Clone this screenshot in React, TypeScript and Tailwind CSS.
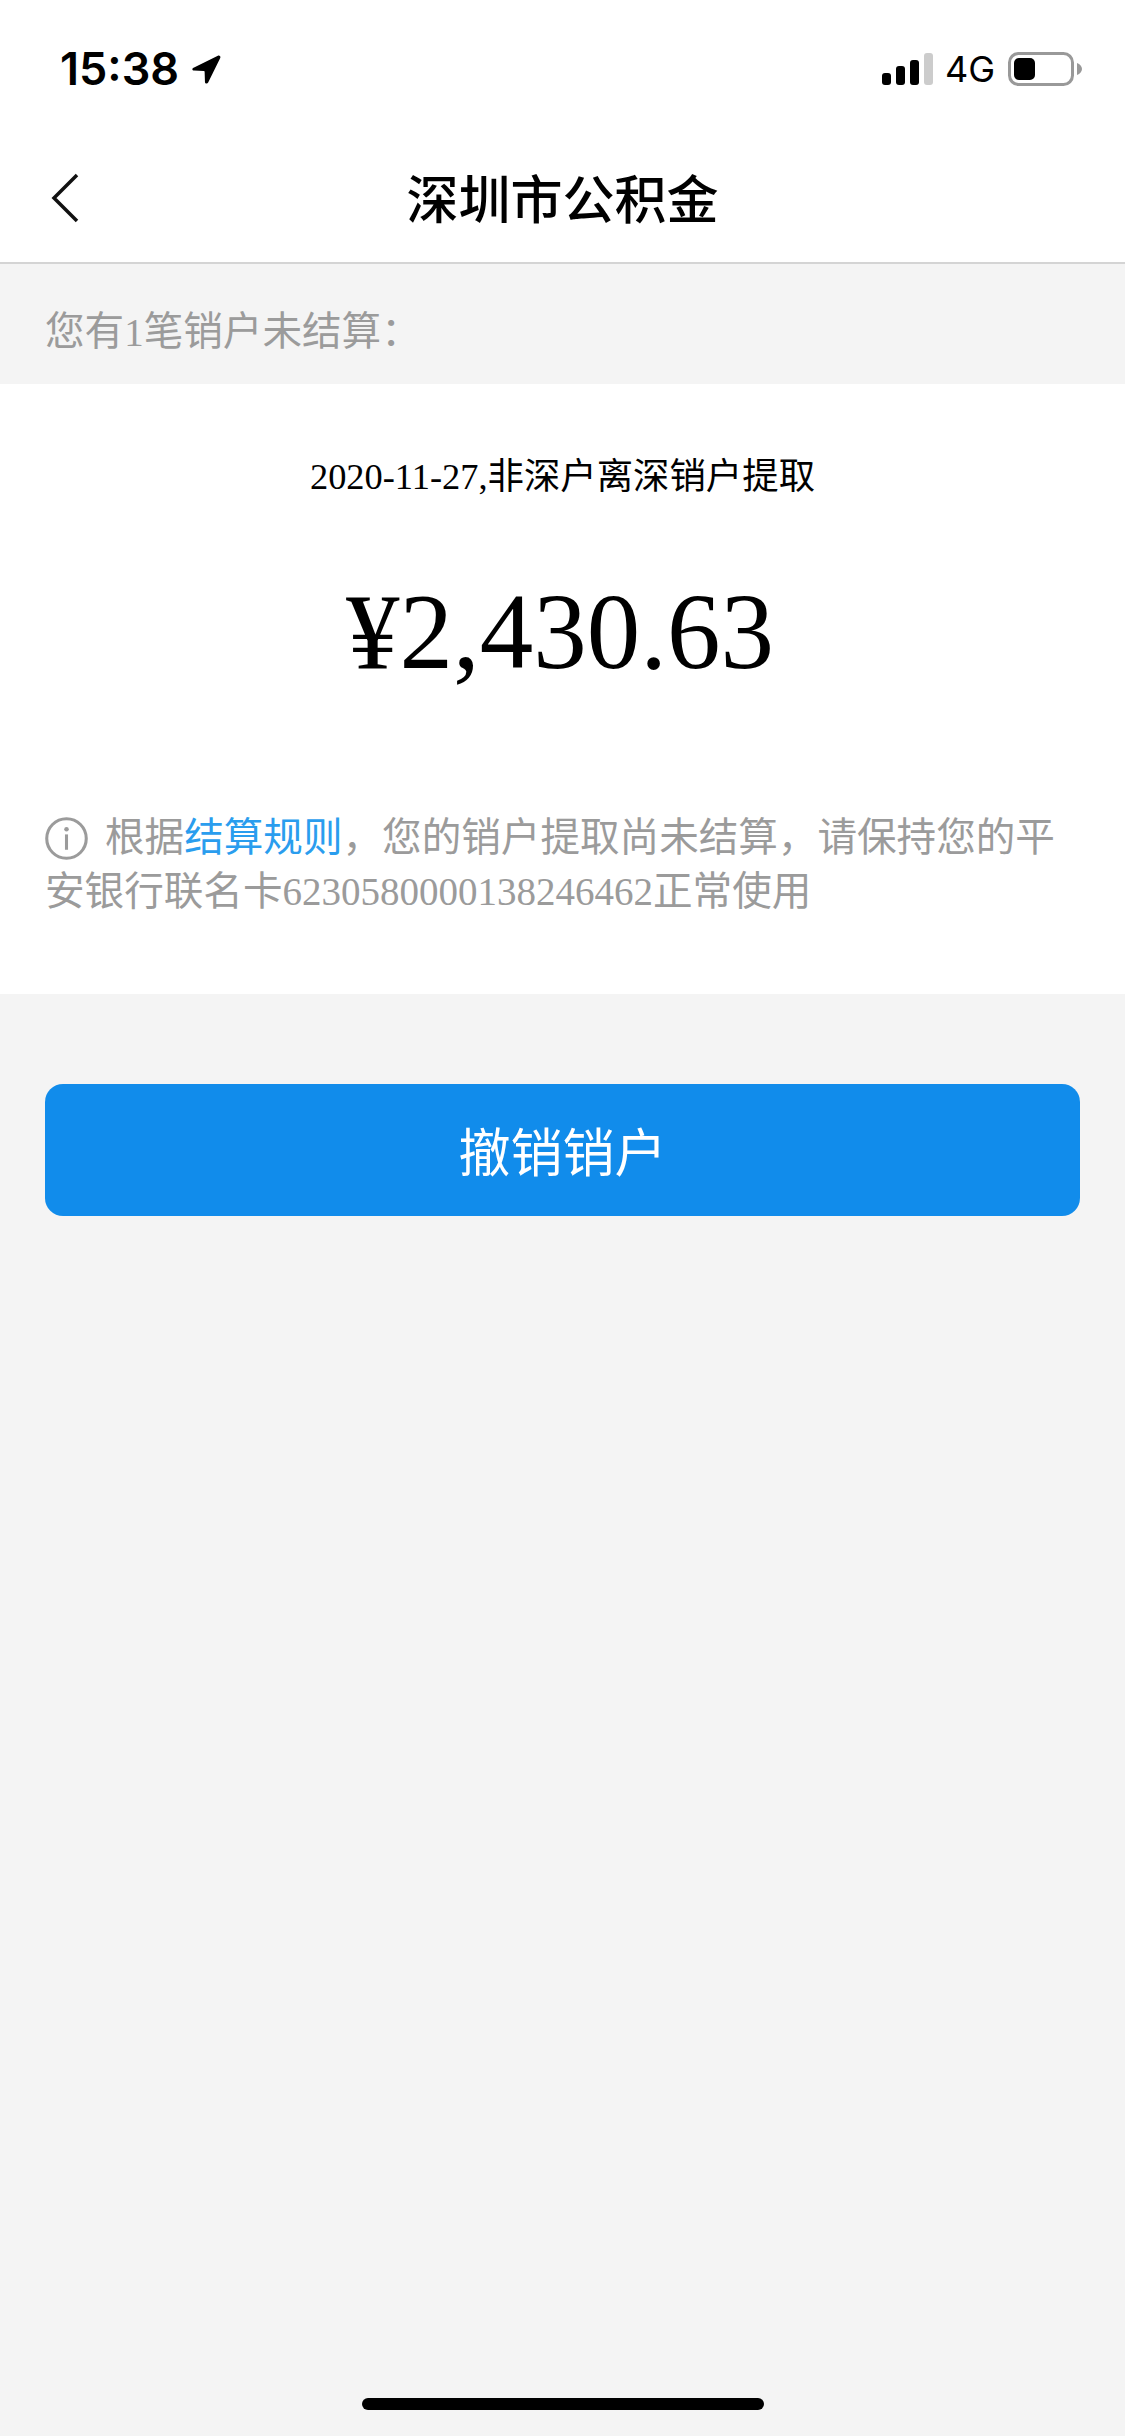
const serif = "font-['Liberation_Serif','Noto_Sans_CJK_SC',serif]";

function LocationArrow() {
  return (
    <svg width="31" height="31" viewBox="0 0 30 30" className="ml-[12px] mt-[1px]">
      <path
        d="M2.500 13.200 26 1.600c1.500-.7 3 .8 2.300 2.300L16.600 27.600c-.8 1.600-3 1.200-3.100-.6l-.3-9.600c0-.5-.4-.9-.9-.9l-9.400-.5c-1.800-.1-2.200-2.100-.4-2.800Z"
        fill="#000"
      />
    </svg>
  );
}

function SignalBars() {
  return (
    <svg width="51" height="32" viewBox="0 0 51 32">
      <rect x="0" y="20" width="9" height="12" rx="3" fill="#000" />
      <rect x="14" y="13" width="9" height="19" rx="3" fill="#000" />
      <rect x="28" y="7" width="9" height="25" rx="3" fill="#000" />
      <rect x="42" y="0" width="9" height="32" rx="3" fill="#cccccc" />
    </svg>
  );
}

function Battery() {
  return (
    <svg width="74" height="34" viewBox="0 0 74 34">
      <rect x="1.500" y="1.500" width="63" height="31" rx="9" fill="none" stroke="#999" strokeWidth="3" />
      <rect x="6" y="6" width="21" height="22" rx="5" fill="#000" />
      <path d="M69 11c3 1 5 3.500 5 6s-2 5-5 6Z" fill="#999" />
    </svg>
  );
}

function InfoIcon() {
  return (
    <svg width="43" height="43" viewBox="0 0 42 42" className="block">
      <circle cx="21" cy="21" r="19.300" fill="none" stroke="#9b9b9b" strokeWidth="3" />
      <circle cx="21" cy="12" r="2.200" fill="#9b9b9b" />
      <rect x="19.500" y="17" width="3" height="15" fill="#9b9b9b" />
    </svg>
  );
}

export default function App() {
  return (
    <div className="flex min-h-[2436px] w-full flex-col bg-[#f4f4f4]">
      {/* status bar */}
      <div className="flex h-[132px] items-start justify-between bg-white pl-[60px] pr-[43px] pt-[45px]">
        <div className="flex items-center">
          <span className="font-['Inter',sans-serif] text-[45px] font-semibold leading-[48px] text-black">15:38</span>
          <LocationArrow />
        </div>
        <div className="flex items-center pt-[7px]">
          <SignalBars />
          <span className="ml-[12px] font-['Inter',sans-serif] text-[36px] font-normal leading-[34px] text-black">4G</span>
          <span className="ml-[13px] flex">
            <Battery />
          </span>
        </div>
      </div>

      {/* nav bar */}
      <div className="relative flex h-[132px] items-center justify-center border-b-2 border-[#d4d4d4] bg-white">
        <button type="button" aria-label="返回" className="absolute left-[50px] top-[41px]">
          <svg width="30" height="50" viewBox="0 0 30 50" className="block">
            <path d="M27 2 4 25l23 23" fill="none" stroke="#111" strokeWidth="3.500" />
          </svg>
        </button>
        <h1 className="font-['Noto_Sans_CJK_SC',sans-serif] text-[52px] font-medium leading-none text-black">深圳市公积金</h1>
      </div>

      {/* pending notice */}
      <div className={`flex h-[120px] items-center px-[45px] pt-[18px] text-[39.6px] text-[#9b9b9b] ${serif}`}>
        您有<span className="text-[39px]">1</span>笔销户未结算：
      </div>

      {/* record card */}
      <div className="flex h-[610px] flex-col bg-white px-[45px] pt-[69px]">
        <p className={`text-center text-[36.400px] leading-[48px] text-black ${serif}`}>2020-11-27,非深户离深销户提取</p>
        <p className={`mt-[69px] pr-[5px] text-center text-[107px] leading-[124px] text-black ${serif}`}>¥2,430.63</p>
        <div className={`relative mt-[117px] text-[39.6px] leading-[54px] text-[#9b9b9b] ${serif}`}>
          <span className="absolute left-0 top-[6px]">
            <InfoIcon />
          </span>
          <p className="indent-[60px]">
            根据<span className="text-[#2a9dee]">结算规则</span>，您的销户提取尚未结算，请保持您的平安银行联名卡
            <span className="text-[39px]">6230580000138246462</span>正常使用
          </p>
        </div>
      </div>

      {/* actions */}
      <div className="px-[45px] pt-[90px]">
        <button
          type="button"
          className="flex h-[132px] w-full items-center justify-center rounded-[18px] bg-[#118ceb] font-['Noto_Sans_CJK_SC',sans-serif] text-[52px] text-white"
        >
          撤销销户
        </button>
      </div>

      {/* home indicator */}
      <div className="mt-auto flex justify-center pb-[26px]">
        <div className="h-[12px] w-[402px] rounded-full bg-black" />
      </div>
    </div>
  );
}
